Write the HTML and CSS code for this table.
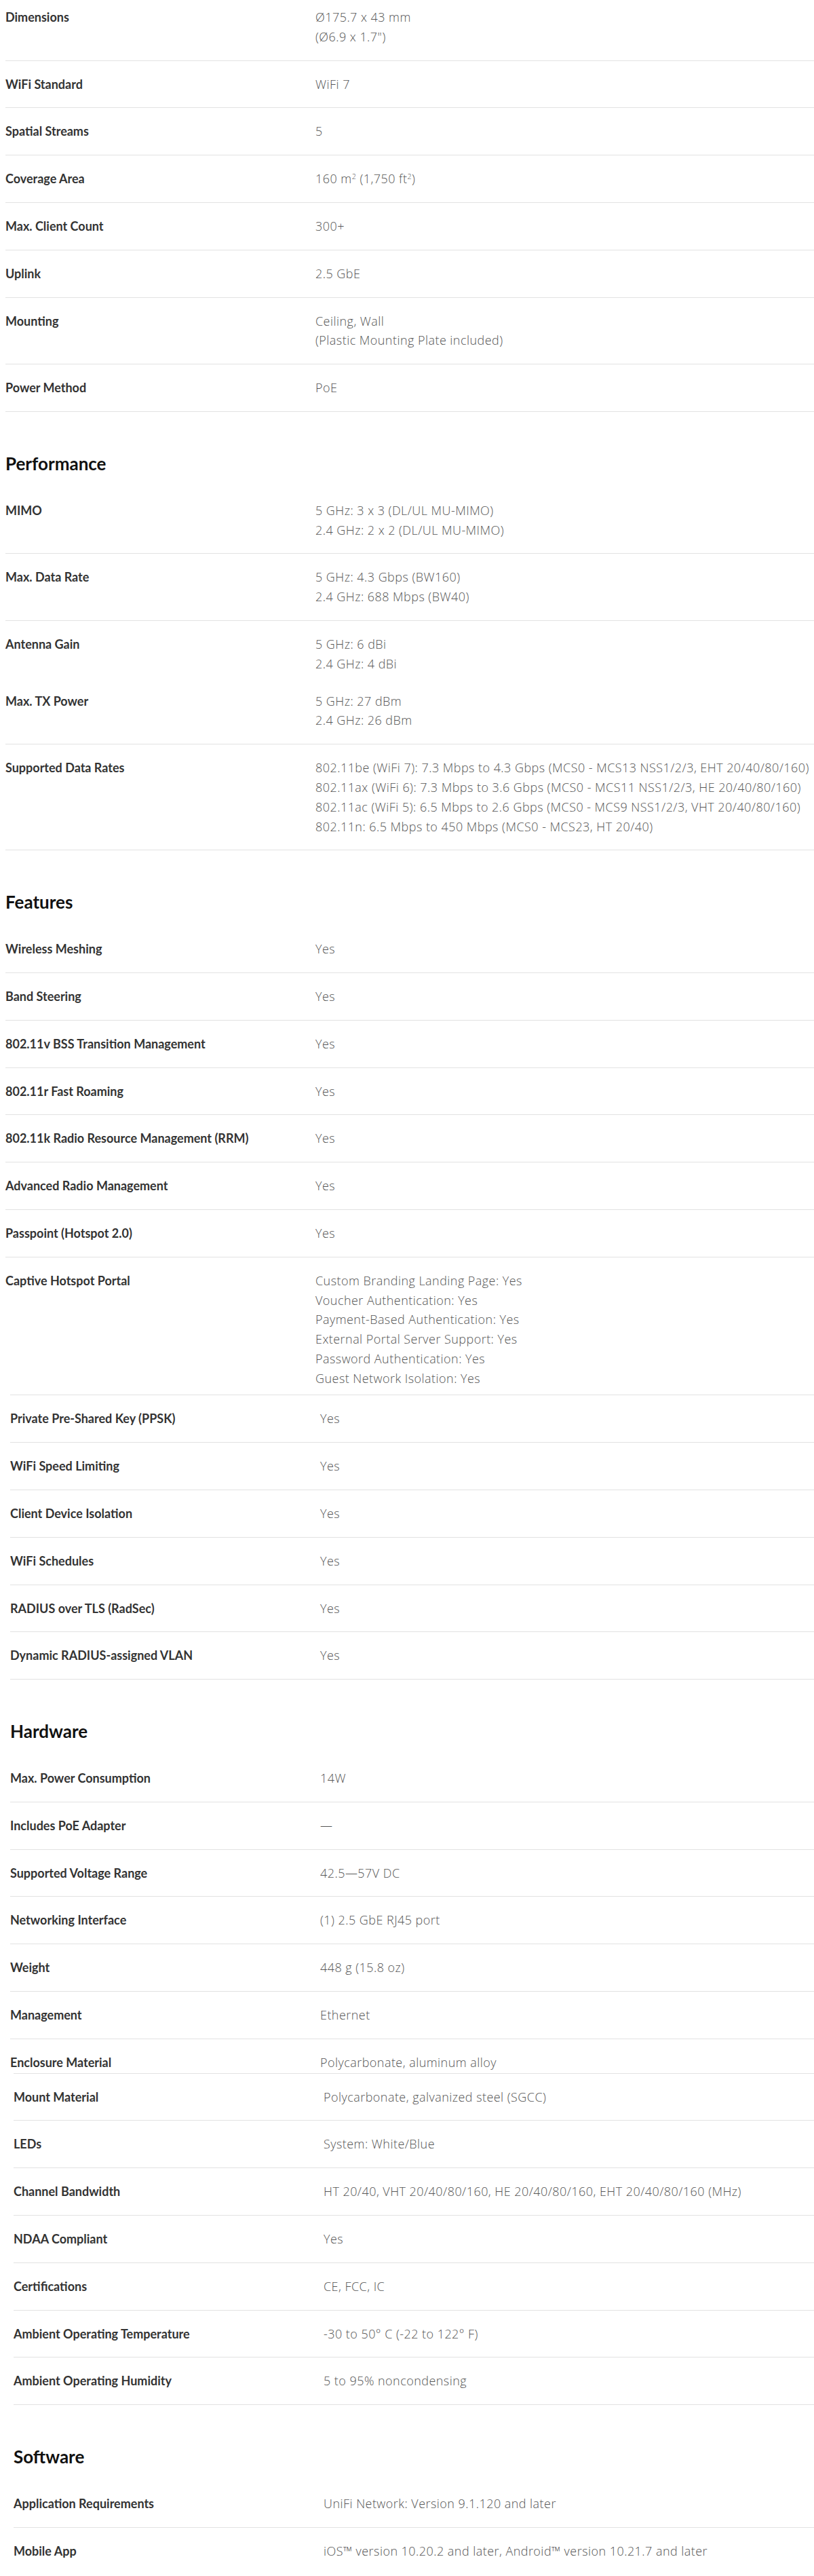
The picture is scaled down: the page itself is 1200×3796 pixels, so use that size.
FILE: index.html
```html
<!DOCTYPE html>
<html lang="en">
<head>
<meta charset="utf-8">
<title>Specifications</title>
<link rel="stylesheet" href="styles.css">
</head>
<body>
<main class="sheet">
  <div class="seg seg-a">
    <div class="row row-first"><div class="label">Dimensions</div><div class="value"><div>Ø175.7 x 43 mm</div><div>(Ø6.9 x 1.7")</div></div></div>
    <div class="row"><div class="label">WiFi Standard</div><div class="value"><div>WiFi 7</div></div></div>
    <div class="row"><div class="label">Spatial Streams</div><div class="value"><div>5</div></div></div>
    <div class="row"><div class="label">Coverage Area</div><div class="value"><div>160 m<sup class="sup">2</sup> (1,750 ft<sup class="sup">2</sup>)</div></div></div>
    <div class="row"><div class="label">Max. Client Count</div><div class="value"><div>300+</div></div></div>
    <div class="row"><div class="label">Uplink</div><div class="value"><div>2.5 GbE</div></div></div>
    <div class="row"><div class="label">Mounting</div><div class="value"><div>Ceiling, Wall</div><div>(Plastic Mounting Plate included)</div></div></div>
    <div class="row"><div class="label">Power Method</div><div class="value"><div>PoE</div></div></div>

    <h2 class="group-title">Performance</h2>
    <div class="row"><div class="label">MIMO</div><div class="value"><div>5 GHz: 3 x 3 (DL/UL MU-MIMO)</div><div>2.4 GHz: 2 x 2 (DL/UL MU-MIMO)</div></div></div>
    <div class="row"><div class="label">Max. Data Rate</div><div class="value"><div>5 GHz: 4.3 Gbps (BW160)</div><div>2.4 GHz: 688 Mbps (BW40)</div></div></div>
    <div class="row row-open"><div class="label">Antenna Gain</div><div class="value"><div>5 GHz: 6 dBi</div><div>2.4 GHz: 4 dBi</div></div></div>
    <div class="row"><div class="label">Max. TX Power</div><div class="value"><div>5 GHz: 27 dBm</div><div>2.4 GHz: 26 dBm</div></div></div>
    <div class="row"><div class="label">Supported Data Rates</div><div class="value"><div>802.11be (WiFi 7): 7.3 Mbps to 4.3 Gbps (MCS0 - MCS13 NSS1/2/3, EHT 20/40/80/160)</div><div>802.11ax (WiFi 6): 7.3 Mbps to 3.6 Gbps (MCS0 - MCS11 NSS1/2/3, HE 20/40/80/160)</div><div>802.11ac (WiFi 5): 6.5 Mbps to 2.6 Gbps (MCS0 - MCS9 NSS1/2/3, VHT 20/40/80/160)</div><div>802.11n: 6.5 Mbps to 450 Mbps (MCS0 - MCS23, HT 20/40)</div></div></div>

    <h2 class="group-title">Features</h2>
    <div class="row"><div class="label">Wireless Meshing</div><div class="value"><div>Yes</div></div></div>
    <div class="row"><div class="label">Band Steering</div><div class="value"><div>Yes</div></div></div>
    <div class="row"><div class="label">802.11v BSS Transition Management</div><div class="value"><div>Yes</div></div></div>
    <div class="row"><div class="label">802.11r Fast Roaming</div><div class="value"><div>Yes</div></div></div>
    <div class="row"><div class="label">802.11k Radio Resource Management (RRM)</div><div class="value"><div>Yes</div></div></div>
    <div class="row"><div class="label">Advanced Radio Management</div><div class="value"><div>Yes</div></div></div>
    <div class="row"><div class="label">Passpoint (Hotspot 2.0)</div><div class="value"><div>Yes</div></div></div>
    <div class="row row-cut-captive"><div class="label">Captive Hotspot Portal</div><div class="value"><div>Custom Branding Landing Page: Yes</div><div>Voucher Authentication: Yes</div><div>Payment-Based Authentication: Yes</div><div>External Portal Server Support: Yes</div><div>Password Authentication: Yes</div><div>Guest Network Isolation: Yes</div></div></div>
  </div>

  <div class="seg seg-b">
    <div class="row"><div class="label">Private Pre-Shared Key (PPSK)</div><div class="value"><div>Yes</div></div></div>
    <div class="row"><div class="label">WiFi Speed Limiting</div><div class="value"><div>Yes</div></div></div>
    <div class="row"><div class="label">Client Device Isolation</div><div class="value"><div>Yes</div></div></div>
    <div class="row"><div class="label">WiFi Schedules</div><div class="value"><div>Yes</div></div></div>
    <div class="row"><div class="label">RADIUS over TLS (RadSec)</div><div class="value"><div>Yes</div></div></div>
    <div class="row"><div class="label">Dynamic RADIUS-assigned VLAN</div><div class="value"><div>Yes</div></div></div>

    <h2 class="group-title">Hardware</h2>
    <div class="row"><div class="label">Max. Power Consumption</div><div class="value"><div>14W</div></div></div>
    <div class="row"><div class="label">Includes PoE Adapter</div><div class="value"><div>—</div></div></div>
    <div class="row"><div class="label">Supported Voltage Range</div><div class="value"><div>42.5—57V DC</div></div></div>
    <div class="row"><div class="label">Networking Interface</div><div class="value"><div>(1) 2.5 GbE RJ45 port</div></div></div>
    <div class="row"><div class="label">Weight</div><div class="value"><div>448 g (15.8 oz)</div></div></div>
    <div class="row"><div class="label">Management</div><div class="value"><div>Ethernet</div></div></div>
    <div class="row row-cut-enclosure"><div class="label">Enclosure Material</div><div class="value"><div>Polycarbonate, aluminum alloy</div></div></div>
  </div>

  <div class="seg seg-c">
    <div class="row"><div class="label">Mount Material</div><div class="value"><div>Polycarbonate, galvanized steel (SGCC)</div></div></div>
    <div class="row"><div class="label">LEDs</div><div class="value"><div>System: White/Blue</div></div></div>
    <div class="row"><div class="label">Channel Bandwidth</div><div class="value"><div>HT 20/40, VHT 20/40/80/160, HE 20/40/80/160, EHT 20/40/80/160 (MHz)</div></div></div>
    <div class="row"><div class="label">NDAA Compliant</div><div class="value"><div>Yes</div></div></div>
    <div class="row"><div class="label">Certifications</div><div class="value"><div>CE, FCC, IC</div></div></div>
    <div class="row"><div class="label">Ambient Operating Temperature</div><div class="value"><div>-30 to 50° C (-22 to 122° F)</div></div></div>
    <div class="row"><div class="label">Ambient Operating Humidity</div><div class="value"><div>5 to 95% noncondensing</div></div></div>

    <h2 class="group-title">Software</h2>
    <div class="row"><div class="label">Application Requirements</div><div class="value"><div>UniFi Network: Version 9.1.120 and later</div></div></div>
    <div class="row row-last"><div class="label">Mobile App</div><div class="value"><div>iOS™ version 10.20.2 and later, Android™ version 10.21.7 and later</div></div></div>
  </div>
</main>
</body>
</html>
```
FILE: styles.css
```css
html, body {
  margin: 0;
  padding: 0;
  background: #ffffff;
}
body {
  overflow-x: hidden;
  font-family: Lato, "Open Sans", "Liberation Sans", sans-serif;
}
.sheet {
  display: flex;
  flex-direction: column;
}
.seg-a { margin-left: 8px; }
.seg-b { margin-left: 15px; border-top: 1px solid #e2e2e2; }
.seg-c { margin-left: 20px; border-top: 1px solid #e2e2e2; }

.row {
  display: grid;
  grid-template-columns: 457px 1fr;
  padding: 20px 0;
  border-bottom: 1px solid #e2e2e2;
  line-height: 28.8px;
}
.row-first { padding-top: 11px; }
.row-open { border-bottom: none; padding-bottom: 6px; }
.row-cut-captive { border-bottom: none; padding-bottom: 10px; }
.row-cut-enclosure { border-bottom: none; padding-bottom: 1px; }
.row-last { border-bottom: none; }

.label {
  font-family: Lato, "Liberation Sans", sans-serif;
  font-weight: 700;
  font-size: 18px;
  color: #333333;
  white-space: nowrap;
}
.value {
  font-family: "Open Sans", "Liberation Sans", sans-serif;
  font-weight: 300;
  font-size: 18px;
  letter-spacing: 0.45px;
  color: #555555;
  white-space: nowrap;
}
.sup {
  font-size: 0.6em;
  line-height: 0;
  vertical-align: 0.6em;
}
.group-title {
  margin: 0;
  padding: 62px 0 20px;
  font-family: Lato, "Liberation Sans", sans-serif;
  font-weight: 700;
  font-size: 26px;
  line-height: 28.8px;
  color: #111111;
}
```
